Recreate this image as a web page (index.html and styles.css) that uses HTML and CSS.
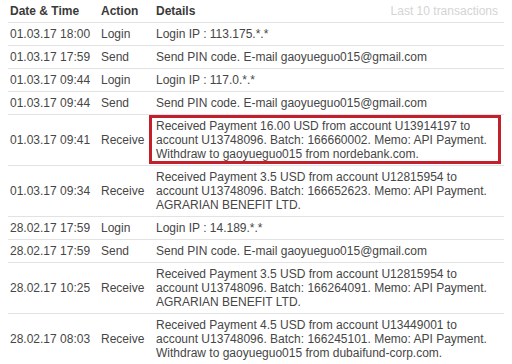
FILE: index.html
```html
<!DOCTYPE html>
<html>
<head>
<meta charset="utf-8">
<link rel="stylesheet" href="styles.css">
</head>
<body>
<table class="tx">
  <thead>
    <tr>
      <th class="c-date">Date &amp; Time</th>
      <th class="c-act">Action</th>
      <th class="c-det">Details <span class="note">Last 10 transactions</span></th>
    </tr>
  </thead>
  <tbody>
    <tr><td>01.03.17 18:00</td><td>Login</td><td>Login IP : 113.175.*.*</td></tr>
    <tr><td>01.03.17 17:59</td><td>Send</td><td>Send PIN code. E-mail gaoyueguo015@gmail.com</td></tr>
    <tr><td>01.03.17 09:44</td><td>Login</td><td>Login IP : 117.0.*.*</td></tr>
    <tr><td>01.03.17 09:44</td><td>Send</td><td>Send PIN code. E-mail gaoyueguo015@gmail.com</td></tr>
    <tr><td>01.03.17 09:41</td><td>Receive</td><td class="marked">Received Payment 16.00 USD from account U13914197 to account U13748096. Batch: 166660002. Memo: API Payment. Withdraw to gaoyueguo015 from nordebank.com.<span class="mark"></span></td></tr>
    <tr><td>01.03.17 09:34</td><td>Receive</td><td>Received Payment 3.5 USD from account U12815954 to account U13748096. Batch: 166652623. Memo: API Payment. AGRARIAN BENEFIT LTD.</td></tr>
    <tr><td>28.02.17 17:59</td><td>Login</td><td>Login IP : 14.189.*.*</td></tr>
    <tr><td>28.02.17 17:59</td><td>Send</td><td>Send PIN code. E-mail gaoyueguo015@gmail.com</td></tr>
    <tr><td>28.02.17 10:25</td><td>Receive</td><td>Received Payment 3.5 USD from account U12815954 to account U13748096. Batch: 166264091. Memo: API Payment. AGRARIAN BENEFIT LTD.</td></tr>
    <tr><td>28.02.17 08:03</td><td>Receive</td><td>Received Payment 4.5 USD from account U13449001 to account U13748096. Batch: 166245101. Memo: API Payment. Withdraw to gaoyueguo015 from dubaifund-corp.com.</td></tr>
  </tbody>
</table>
</body>
</html>
```

FILE: styles.css
```css
html, body {
  background: #fff;
}
body {
  margin: 0 8px;
  font-family: "Liberation Sans", Arial, sans-serif;
  font-size: 12px;
  line-height: 14px;
  color: #464646;
}
.tx {
  width: 496px;
  border-collapse: collapse;
  table-layout: fixed;
}
.tx th,
.tx td {
  padding: 4px 6px 4px 2px;
  text-align: left;
  vertical-align: middle;
  border-bottom: 1px solid #e2e2e2;
}
.tx th {
  font-weight: bold;
  color: #3a3a3a;
}
.c-date { width: 83px; }
.c-act { width: 47px; }
.note {
  float: right;
  font-weight: normal;
  color: #d4d4d4;
}
.marked {
  position: relative;
}
.mark {
  position: absolute;
  left: -5px;
  top: 0;
  right: 3px;
  bottom: 1px;
  border: 3px solid #c4202c;
  pointer-events: none;
}
```
